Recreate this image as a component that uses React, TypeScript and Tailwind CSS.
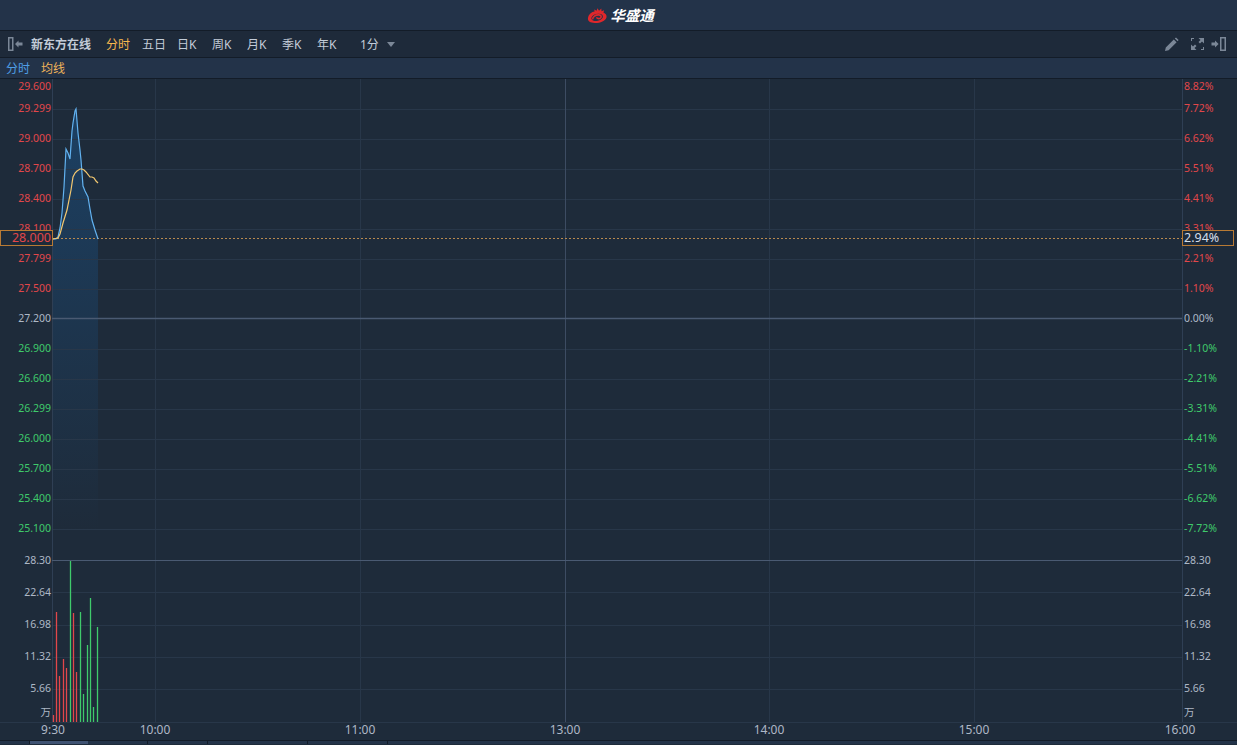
import React from "react";

const sans = "font-['Noto_Sans','Noto_Sans_CJK_SC',sans-serif]";

// left and right axis rows: text, y centre, colour
const RED = "text-[#e2474a]";
const GREEN = "text-[#3fca6b]";
const GREY = "text-[#aeb8c6]";

const priceRows = [
  ["29.600", "8.82%", 86, RED],
  ["29.299", "7.72%", 108, RED],
  ["29.000", "6.62%", 138, RED],
  ["28.700", "5.51%", 168, RED],
  ["28.400", "4.41%", 198, RED],
  ["28.100", "3.31%", 228, RED],
  ["27.799", "2.21%", 258, RED],
  ["27.500", "1.10%", 288, RED],
  ["27.200", "0.00%", 318, GREY],
  ["26.900", "-1.10%", 348, GREEN],
  ["26.600", "-2.21%", 378, GREEN],
  ["26.299", "-3.31%", 408, GREEN],
  ["26.000", "-4.41%", 438, GREEN],
  ["25.700", "-5.51%", 468, GREEN],
  ["25.400", "-6.62%", 498, GREEN],
  ["25.100", "-7.72%", 528, GREEN],
] as const;

const volumeRows = [
  ["28.30", 560],
  ["22.64", 592],
  ["16.98", 624],
  ["11.32", 656],
  ["5.66", 688],
  ["万", 712],
] as const;

const times = [
  ["9:30", 53],
  ["10:00", 155],
  ["11:00", 360],
  ["13:00", 565],
  ["14:00", 769],
  ["15:00", 974],
  ["16:00", 1180],
] as const;

const gridY = [109, 139, 169, 199, 229, 259, 289, 349, 379, 409, 439, 469, 499, 529, 592, 625, 657, 689];
const gridX = [155, 360, 769, 974];

const bars = [
  [53, 715, "r"],
  [56, 612, "r"],
  [59, 676, "r"],
  [63, 659, "r"],
  [66, 668, "r"],
  [70, 561, "g"],
  [73, 613, "r"],
  [76, 672, "r"],
  [80, 612, "g"],
  [83, 694, "g"],
  [87, 645, "g"],
  [90, 598, "g"],
  [93, 707, "g"],
  [97, 627, "g"],
] as const;

const priceLine =
  "53,239 56,239 58,237 60,228 62,213 64,187 66,149 68,153 70,159 72,131 73,123 75,111 76,109 78,133 80,150 81,160 83,186 85,191 88,197 90,209 92,220 95,230 98,239";
const avgLine =
  "53,239 58,238 60,234 63,223 67,210 71,190 73,177 75,173 77,171 80,169 82,169 84,170 86,172 90,177 92,177 94,178 96,181 98,183";

const periods = ["五日", "日K", "周K", "月K", "季K", "年K"];

const Logo = () => (
  <svg width="21" height="17" viewBox="0 0 22 17" className="mr-[2px]">
    <path
      d="M1 11.5C1.5 7 5 4.5 8 4.2L7.5 2.2 10 3.6 11 .8 12.6 3.4 15 1.2 15.2 4 18 3 17.2 5.4C19.6 6.6 21 8.4 20.4 10.6 19.4 14.4 13.6 16.6 8 16.4 3.6 16.2.6 14.8 1 11.5Z"
      fill="#e0272b"
    />
    <ellipse cx="10.6" cy="10.4" rx="6.2" ry="3.6" transform="rotate(-14 10.6 10.4)" fill="#233349" />
    <path
      d="M6 12.6C5.6 9.8 9 7.6 12.4 7.8 15 8 15.6 10 14 11.2 12.4 12.2 10.2 11.8 10.2 10.4"
      fill="none"
      stroke="#e0272b"
      strokeWidth="1.7"
    />
  </svg>
);

const Toolbar = () => (
  <div className={`flex h-[28px] items-center border-y border-[#131c28] bg-[#1e2a3a] text-[12px] leading-none text-[#c3ccd8] ${sans}`}>
    <svg width="16" height="14" viewBox="0 0 16 14" className="ml-[8px] text-[#7b8797]">
      <rect x="0.75" y="0.75" width="4" height="12.5" fill="none" stroke="currentColor" strokeWidth="1.5" />
      <path d="M7 7 10.5 3.6V5.4H14.5V8.6H10.5V10.4Z" fill="currentColor" />
    </svg>
    <span className="ml-[7px] w-[60px] pt-[2px] font-bold">新东方在线</span>
    <span className="ml-[15px] w-[36px] pt-[2px] text-[#f7b84e]">分时</span>
    {periods.map((label) => (
      <span key={label} className="w-[35px] pt-[2px]">
        {label}
      </span>
    ))}
    <span className="ml-[8px] w-[27px] pt-[2px]">1分</span>
    <span className="h-0 w-0 border-x-[4px] border-t-[5px] border-x-transparent border-t-[#7b8797]" />
    <div className="ml-auto mr-[10px] flex items-center text-[#7b8797]">
      <svg width="15" height="15" viewBox="0 0 15 15" className="mr-[11px]">
        <path d="M1 14 1.8 10.4 9.8 2.4 12.6 5.2 4.6 13.2ZM10.8 1.4 12 .4 14.6 3 13.6 4.2Z" fill="currentColor" />
      </svg>
      <svg width="15" height="14" viewBox="0 0 15 14" className="mr-[6px]">
        <path
          d="M8.5 1H14V6.5L12 4.5 10 6.5 8.5 5 10.5 3ZM1 7.5 3 9.5 5 7.5 6.5 9 4.5 11 6.5 13H1ZM1 1H4V2H2V4H1ZM14 10V13H11V12H13V10Z"
          fill="currentColor"
        />
      </svg>
      <svg width="16" height="14" viewBox="0 0 16 14">
        <path d="M.5 5.4H4V3.6L7.6 7 4 10.4V8.6H.5Z" fill="currentColor" />
        <rect x="9.75" y="0.75" width="4.5" height="12.5" fill="none" stroke="currentColor" strokeWidth="1.5" />
      </svg>
    </div>
  </div>
);

const Chart = () => (
  <div className={`relative h-[644px] border-t border-[#131c28] bg-[#1e2b3a] text-[10.5px] leading-none ${sans}`}>
    <svg className="absolute inset-0" width="1237" height="644" viewBox="0 79 1237 644">
      <defs>
        <linearGradient id="area" x1="0" y1="109" x2="0" y2="530" gradientUnits="userSpaceOnUse">
          <stop offset="0" stopColor="#1c4063" />
          <stop offset="1" stopColor="#1e2b3a" />
        </linearGradient>
      </defs>
      <polygon points={`${priceLine} 98,530 53,530`} fill="url(#area)" />
      {gridY.map((y) => (
        <line key={y} x1="52" x2="1182" y1={y + 0.5} y2={y + 0.5} stroke="#283749" />
      ))}
      {gridX.map((x) => (
        <line key={x} x1={x + 0.5} x2={x + 0.5} y1="79" y2="723" stroke="#283749" />
      ))}
      <line x1="565.5" x2="565.5" y1="79" y2="723" stroke="#3d4c62" />
      <line x1="52.5" x2="52.5" y1="79" y2="723" stroke="#2f3f54" />
      <line x1="1182.5" x2="1182.5" y1="79" y2="723" stroke="#2f3f54" />
      <line x1="52" x2="1182" y1="318.5" y2="318.5" stroke="#4a5a72" strokeWidth="1.4" />
      <line x1="52" x2="1182" y1="560.5" y2="560.5" stroke="#4a5a72" strokeWidth="1.2" />

      <line x1="53" x2="1182" y1="238.5" y2="238.5" stroke="#b98a50" strokeDasharray="2 2" />
      <polyline points={priceLine} fill="none" stroke="#62b2f0" strokeWidth="1.2" />
      <polyline points={avgLine} fill="none" stroke="#f3c870" strokeWidth="1.2" />

      {bars.map(([x, top, side]) => (
        <line
          key={x}
          x1={x + 0.5}
          x2={x + 0.5}
          y1={top}
          y2="723"
          strokeWidth="1.3"
          stroke={side === "r" ? "#e2474a" : "#3fca6b"}
        />
      ))}
    </svg>

    {priceRows.map(([left, right, y, color]) => (
      <React.Fragment key={left}>
        <span className={`absolute right-[1186px] -translate-y-1/2 ${color}`} style={{ top: y - 79 }}>
          {left}
        </span>
        <span className={`absolute left-[1184px] -translate-y-1/2 ${color}`} style={{ top: y - 79 }}>
          {right}
        </span>
      </React.Fragment>
    ))}

    {volumeRows.map(([label, y]) => (
      <React.Fragment key={label}>
        <span className={`absolute right-[1186px] -translate-y-1/2 ${GREY}`} style={{ top: y - 79 }}>
          {label}
        </span>
        <span className={`absolute left-[1184px] -translate-y-1/2 ${GREY}`} style={{ top: y - 79 }}>
          {label}
        </span>
      </React.Fragment>
    ))}

    {/* current price markers */}
    <div className="absolute left-0 top-[151px] flex h-[16px] w-[53px] items-center justify-end border border-[#b87a34] bg-[#1e2b3a] pr-[1px] text-[12.5px] text-[#e2474a]">
      28.000
    </div>
    <div className="absolute left-[1182px] top-[151px] flex h-[16px] w-[52px] items-center border border-[#b87a34] bg-[#1e2b3a] pl-[1px] text-[12.5px] text-[#d5dfea]">
      2.94%
    </div>
  </div>
);

const TimeAxis = () => (
  <div className={`relative h-[18px] border-t border-[#283749] bg-[#1e2b3a] text-[12px] leading-none text-[#aeb8c6] ${sans}`}>
    {times.map(([label, x]) => (
      <span key={label} className="absolute top-[1px] -translate-x-1/2" style={{ left: x }}>
        {label}
      </span>
    ))}
  </div>
);

const BottomStrip = () => (
  <div className="flex h-[4px] border-t border-[#131c28] bg-[#233349]">
    <div className="w-[30px] border-r border-[#131c28]" />
    <div className="w-[58px] bg-[#3f5272]" />
    <div className="w-[60px] border-r border-[#131c28]" />
    <div className="w-[60px] border-r border-[#131c28]" />
    <div className="w-[100px] border-r border-[#131c28]" />
    <div className="w-[80px] border-r border-[#131c28]" />
  </div>
);

export default function App() {
  return (
    <div className="flex h-[745px] w-[1237px] flex-col overflow-hidden bg-[#1e2b3a]">
      <div className="flex h-[30px] items-center justify-center bg-[#233349] pl-[4px]">
        <Logo />
        <span className="text-[14.5px] font-bold italic leading-none text-white font-['Noto_Sans_CJK_SC',sans-serif]">
          华盛通
        </span>
      </div>
      <Toolbar />
      <div className={`flex h-[20px] items-center gap-[11px] bg-[#233349] pl-[6px] pt-[2px] text-[12px] leading-none ${sans}`}>
        <span className="text-[#4f9fe6]">分时</span>
        <span className="text-[#f0b45a]">均线</span>
      </div>
      <Chart />
      <TimeAxis />
      <BottomStrip />
    </div>
  );
}
